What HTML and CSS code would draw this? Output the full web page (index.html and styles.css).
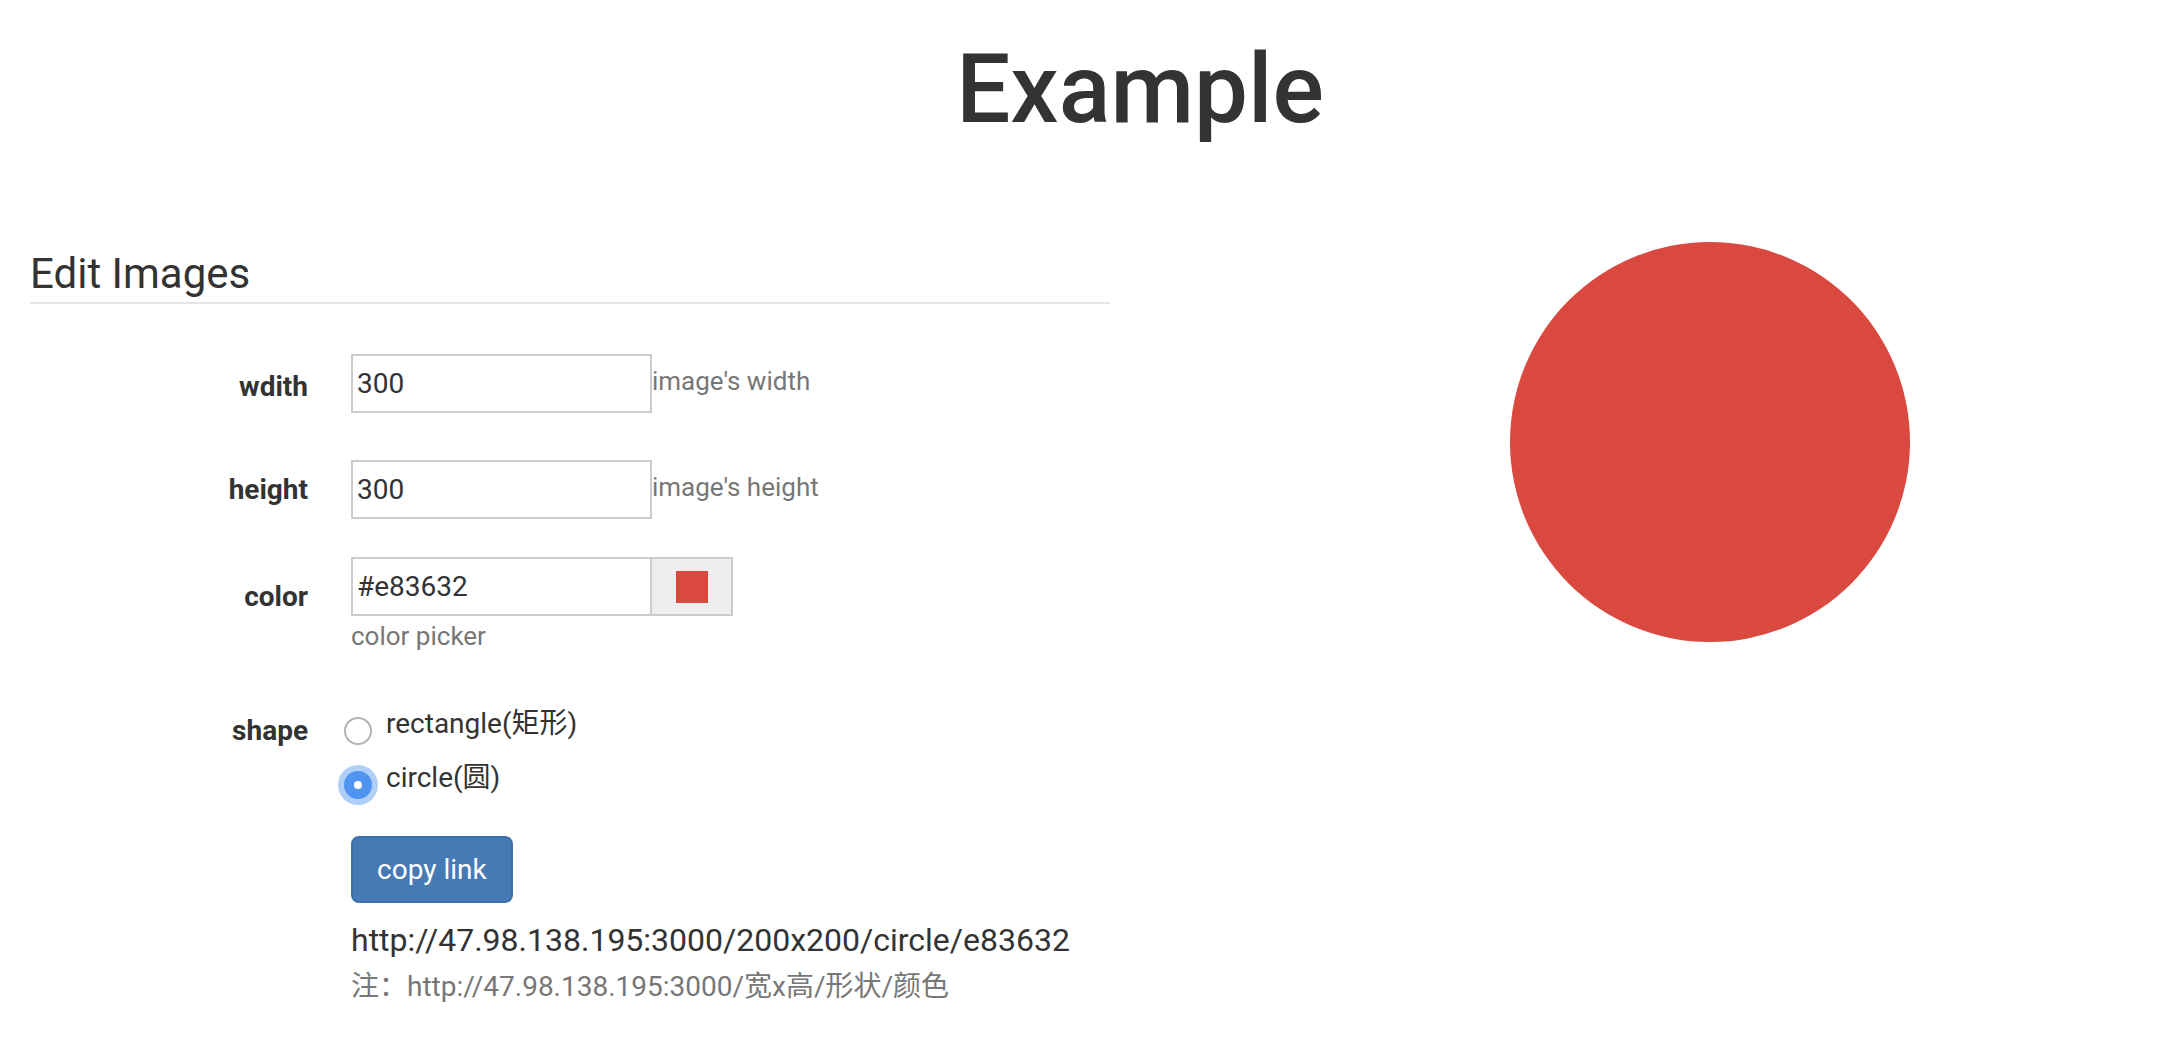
FILE: index.html
```html
<!DOCTYPE html>
<html lang="en">
<head>
<meta charset="utf-8">
<title>Example</title>
<link rel="stylesheet" href="styles.css">
</head>
<body>
<div class="page">
  <h1 class="title">Example</h1>
  <div class="columns">
    <section class="col col-form">
      <div class="legend">Edit Images</div>

      <div class="row row-width">
        <label class="label label-width">wdith</label>
        <div class="control inline">
          <input class="text-input" type="text" value="300">
          <span class="help-inline">image's width</span>
        </div>
      </div>

      <div class="row row-height">
        <label class="label">height</label>
        <div class="control inline">
          <input class="text-input" type="text" value="300">
          <span class="help-inline">image's height</span>
        </div>
      </div>

      <div class="row row-color">
        <label class="label label-color">color</label>
        <div class="control">
          <div class="input-group">
            <input class="text-input" type="text" value="#e83632">
            <span class="addon"><span class="swatch"></span></span>
          </div>
          <div class="help-block">color picker</div>
        </div>
      </div>

      <div class="row row-shape">
        <label class="label">shape</label>
        <div class="control">
          <div class="radios">
            <div class="option"><span class="radio"></span><span class="option-text">rectangle(矩形)</span></div>
            <div class="option option-second"><span class="radio checked"></span><span class="option-text">circle(圆)</span></div>
          </div>
          <button class="btn" type="button">copy link</button>
          <div class="url">http://47.98.138.195:3000/200x200/circle/e83632</div>
          <div class="note">注：http://47.98.138.195:3000/宽x高/形状/颜色</div>
        </div>
      </div>
    </section>

    <section class="col col-preview">
      <svg class="preview" width="400" height="400" viewBox="0 0 400 400" xmlns="http://www.w3.org/2000/svg">
        <circle cx="200" cy="200" r="200" fill="#d9493f"/>
      </svg>
    </section>
  </div>
</div>
</body>
</html>
```

FILE: styles.css
```css
html, body {
  margin: 0;
  padding: 0;
  background: #fff;
  overflow: hidden;
}

body {
  font-family: Roboto, "Noto Sans CJK SC", sans-serif;
  color: #333;
}

.page {
  width: 2280px;
}

.title {
  margin: 41px 0 0;
  font-size: 96px;
  line-height: 96px;
  font-weight: 500;
  text-align: center;
  color: #333;
}

.columns {
  display: grid;
  grid-template-columns: 1140px 1140px;
}

.col-form {
  padding: 0 30px;
}

.legend {
  margin-top: 114px;
  padding-bottom: 5px;
  font-size: 42px;
  line-height: 46px;
  color: #333;
  border-bottom: 2px solid #e5e5e5;
}

.row {
  display: flex;
  align-items: flex-start;
}

.row-width { margin-top: 50px; }
.row-height { margin-top: 47px; }
.row-color { margin-top: 38px; }
.row-shape { margin-top: 50px; }

.label {
  flex: none;
  box-sizing: border-box;
  width: 278px;
  height: 59px;
  text-align: right;
  font-weight: 700;
  font-size: 28px;
  line-height: 59px;
  color: #333;
}

.label-width {
  padding-top: 3px;
}

.label-color {
  padding-top: 10px;
}

.control {
  margin-left: 43px;
}

.inline {
  display: flex;
  align-items: flex-start;
}

.text-input {
  box-sizing: border-box;
  width: 301px;
  height: 59px;
  margin: 0;
  padding: 0 4px;
  border: 2px solid #ccc;
  border-radius: 0;
  font-family: Roboto, "Noto Sans CJK SC", sans-serif;
  font-size: 28px;
  color: #333;
  background: #fff;
  outline: none;
}

.help-inline {
  box-sizing: border-box;
  height: 59px;
  padding-top: 2px;
  font-size: 26px;
  line-height: 51px;
  color: #777;
  white-space: nowrap;
}

.input-group {
  display: flex;
}

.addon {
  box-sizing: border-box;
  width: 83px;
  height: 59px;
  margin-left: -2px;
  border: 2px solid #ccc;
  background: #eee;
  display: flex;
  align-items: center;
  justify-content: center;
}

.swatch {
  width: 32px;
  height: 32px;
  background: #d9493f;
}

.help-block {
  margin-top: 5px;
  font-size: 26px;
  line-height: 30px;
  color: #777;
}

.radios {
  margin-left: -7px;
  padding-top: 3px;
}

.option {
  display: flex;
  align-items: center;
  height: 40px;
  gap: 14px;
}

.option-second {
  margin-top: 14px;
}

.option-text {
  font-size: 28px;
  line-height: 40px;
  color: #333;
}

.radio {
  box-sizing: border-box;
  flex: none;
  width: 28px;
  height: 28px;
  margin-top: 14px;
  border-radius: 50%;
  border: 2px solid #b3b3b3;
  background: #fff;
  display: flex;
  align-items: center;
  justify-content: center;
}

.radio.checked {
  border: none;
  background: #4f94ee;
  box-shadow: 0 0 0 6px rgba(79, 148, 238, 0.45);
}

.radio.checked::after {
  content: "";
  width: 8px;
  height: 8px;
  border-radius: 50%;
  background: #fff;
}

.btn {
  display: block;
  box-sizing: border-box;
  height: 67px;
  margin-top: 38px;
  padding: 0 24px;
  border: 2px solid #3d70a8;
  border-radius: 8px;
  background: #457ab5;
  color: #fff;
  font-family: Roboto, "Noto Sans CJK SC", sans-serif;
  font-size: 28px;
  line-height: 63px;
}

.url {
  margin-top: 17px;
  font-size: 32px;
  line-height: 40px;
  color: #333;
  white-space: nowrap;
}

.note {
  margin-top: 9px;
  font-size: 28px;
  line-height: 36px;
  color: #777;
  white-space: nowrap;
}

.col-preview {
  display: flex;
  justify-content: center;
  align-items: flex-start;
}

.preview {
  display: block;
  margin-top: 105px;
}
```
